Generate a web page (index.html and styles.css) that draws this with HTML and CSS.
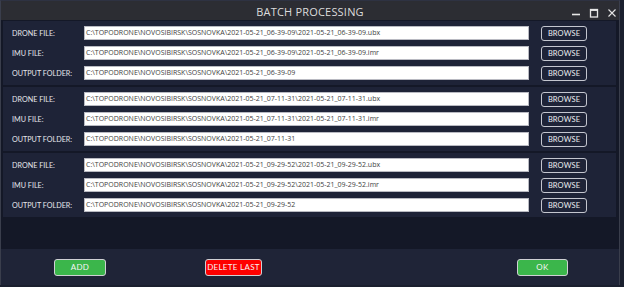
FILE: index.html
```html
<!DOCTYPE html>
<html>
<head>
<meta charset="utf-8">
<title>Batch processing</title>
<link rel="stylesheet" href="styles.css">
</head>
<body>
<div class="window">
  <div class="titlebar">
    <span></span>
    <span class="title">BATCH PROCESSING</span>
    <div class="controls">
      <svg width="10" height="10" viewBox="0 0 10 10"><path d="M1 6.5h8" stroke="#e6e6e6" stroke-width="1.6"/></svg>
      <svg width="10" height="10" viewBox="0 0 10 10"><rect x="1.5" y="1.5" width="7" height="7.5" fill="none" stroke="#e6e6e6" stroke-width="1.3"/><path d="M1.5 2.2h7" stroke="#e6e6e6" stroke-width="1.5"/></svg>
      <svg width="10" height="10" viewBox="0 0 10 10"><path d="M1.5 1.5l7 7M8.5 1.5l-7 7" stroke="#e6e6e6" stroke-width="1.1"/></svg>
    </div>
  </div>
  <div class="content">
    <div class="group">
      <div class="row"><span class="label">DRONE FILE:</span><div class="field">C:\TOPODRONE\NOVOSIBIRSK\SOSNOVKA\2021-05-21_06-39-09\2021-05-21_06-39-09.ubx</div><button class="browse">BROWSE</button></div>
      <div class="row"><span class="label">IMU FILE:</span><div class="field">C:\TOPODRONE\NOVOSIBIRSK\SOSNOVKA\2021-05-21_06-39-09\2021-05-21_06-39-09.imr</div><button class="browse">BROWSE</button></div>
      <div class="row"><span class="label">OUTPUT FOLDER:</span><div class="field">C:\TOPODRONE\NOVOSIBIRSK\SOSNOVKA\2021-05-21_06-39-09</div><button class="browse">BROWSE</button></div>
    </div>
    <div class="group">
      <div class="row"><span class="label">DRONE FILE:</span><div class="field">C:\TOPODRONE\NOVOSIBIRSK\SOSNOVKA\2021-05-21_07-11-31\2021-05-21_07-11-31.ubx</div><button class="browse">BROWSE</button></div>
      <div class="row"><span class="label">IMU FILE:</span><div class="field">C:\TOPODRONE\NOVOSIBIRSK\SOSNOVKA\2021-05-21_07-11-31\2021-05-21_07-11-31.imr</div><button class="browse">BROWSE</button></div>
      <div class="row"><span class="label">OUTPUT FOLDER:</span><div class="field">C:\TOPODRONE\NOVOSIBIRSK\SOSNOVKA\2021-05-21_07-11-31</div><button class="browse">BROWSE</button></div>
    </div>
    <div class="group">
      <div class="row"><span class="label">DRONE FILE:</span><div class="field">C:\TOPODRONE\NOVOSIBIRSK\SOSNOVKA\2021-05-21_09-29-52\2021-05-21_09-29-52.ubx</div><button class="browse">BROWSE</button></div>
      <div class="row"><span class="label">IMU FILE:</span><div class="field">C:\TOPODRONE\NOVOSIBIRSK\SOSNOVKA\2021-05-21_09-29-52\2021-05-21_09-29-52.imr</div><button class="browse">BROWSE</button></div>
      <div class="row"><span class="label">OUTPUT FOLDER:</span><div class="field">C:\TOPODRONE\NOVOSIBIRSK\SOSNOVKA\2021-05-21_09-29-52</div><button class="browse">BROWSE</button></div>
    </div>
    <div class="spacer"></div>
    <div class="footer">
      <button class="btn add">ADD</button>
      <button class="btn delete">DELETE LAST</button>
      <button class="btn ok">OK</button>
    </div>
  </div>
</div>
</body>
</html>
```
FILE: styles.css
```css
html, body {
  margin: 0;
  padding: 0;
}
body {
  width: 624px;
  height: 287px;
  background: #1a1f2e;
  font-family: "Open Sans", "DejaVu Sans", sans-serif;
  overflow: hidden;
}
.window {
  width: 620px;
  height: 285px;
  box-sizing: border-box;
  border: 1px solid #3a3e4c;
  border-top-color: #2e3242;
  display: flex;
  flex-direction: column;
  background: #141827;
}
.titlebar {
  height: 19px;
  flex: none;
  background: #2c2d33;
  display: grid;
  grid-template-columns: 1fr auto 1fr;
  align-items: center;
}
.title {
  color: #dcdcdc;
  font-size: 11px;
  letter-spacing: 0.2px;
  padding-top: 1px;
}
.controls {
  justify-self: end;
  display: flex;
  gap: 8px;
  padding-right: 2px;
  padding-top: 4px;
}
.controls svg {
  display: block;
}
.content {
  flex: 1;
  display: flex;
  flex-direction: column;
  padding-top: 1px;
  gap: 2px;
}
.group {
  margin: 0 3px 0 2px;
  height: 64px;
  box-sizing: border-box;
  padding: 2px 0 2px 9px;
  background: #1e2337;
  display: flex;
  flex-direction: column;
}
.row {
  height: 20px;
  display: flex;
  align-items: center;
}
.label {
  width: 72px;
  flex: none;
  color: #e6e7ec;
  font-family: "Lato", "Open Sans", sans-serif;
  font-size: 7.2px;
  letter-spacing: 0;
}
.field {
  width: 445px;
  height: 14px;
  box-sizing: border-box;
  flex: none;
  background: #ffffff;
  border: 1px solid #b9bac2;
  color: #3e3e3e;
  font-size: 7px;
  line-height: 12px;
  padding-left: 1px;
  white-space: nowrap;
  overflow: hidden;
}
.browse {
  margin-left: 12px;
  width: 46px;
  height: 15px;
  box-sizing: border-box;
  background: transparent;
  border: 1px solid #c4c6cf;
  border-radius: 3px;
  color: #eceef2;
  font-family: "Lato", "Open Sans", sans-serif;
  font-size: 7.5px;
  letter-spacing: 0.1px;
  padding: 0;
  line-height: 13px;
}
.spacer {
  height: 28px;
  flex: none;
}
.footer {
  height: 36px;
  flex: none;
  background: #1f2437;
  display: flex;
  align-items: center;
  padding: 0 51px 0 53px;
}
.btn {
  height: 17px;
  box-sizing: border-box;
  border: 1px solid #cfd0d4;
  border-radius: 3px;
  color: #f4f4f4;
  font-family: "Lato", "Open Sans", sans-serif;
  font-size: 8px;
  letter-spacing: 0.3px;
  padding: 0;
}
.add {
  width: 52px;
  background: #3bb64b;
}
.delete {
  width: 57px;
  margin-left: 99px;
  background: #fe0000;
}
.ok {
  width: 51px;
  margin-left: auto;
  background: #3bb64b;
}
```
